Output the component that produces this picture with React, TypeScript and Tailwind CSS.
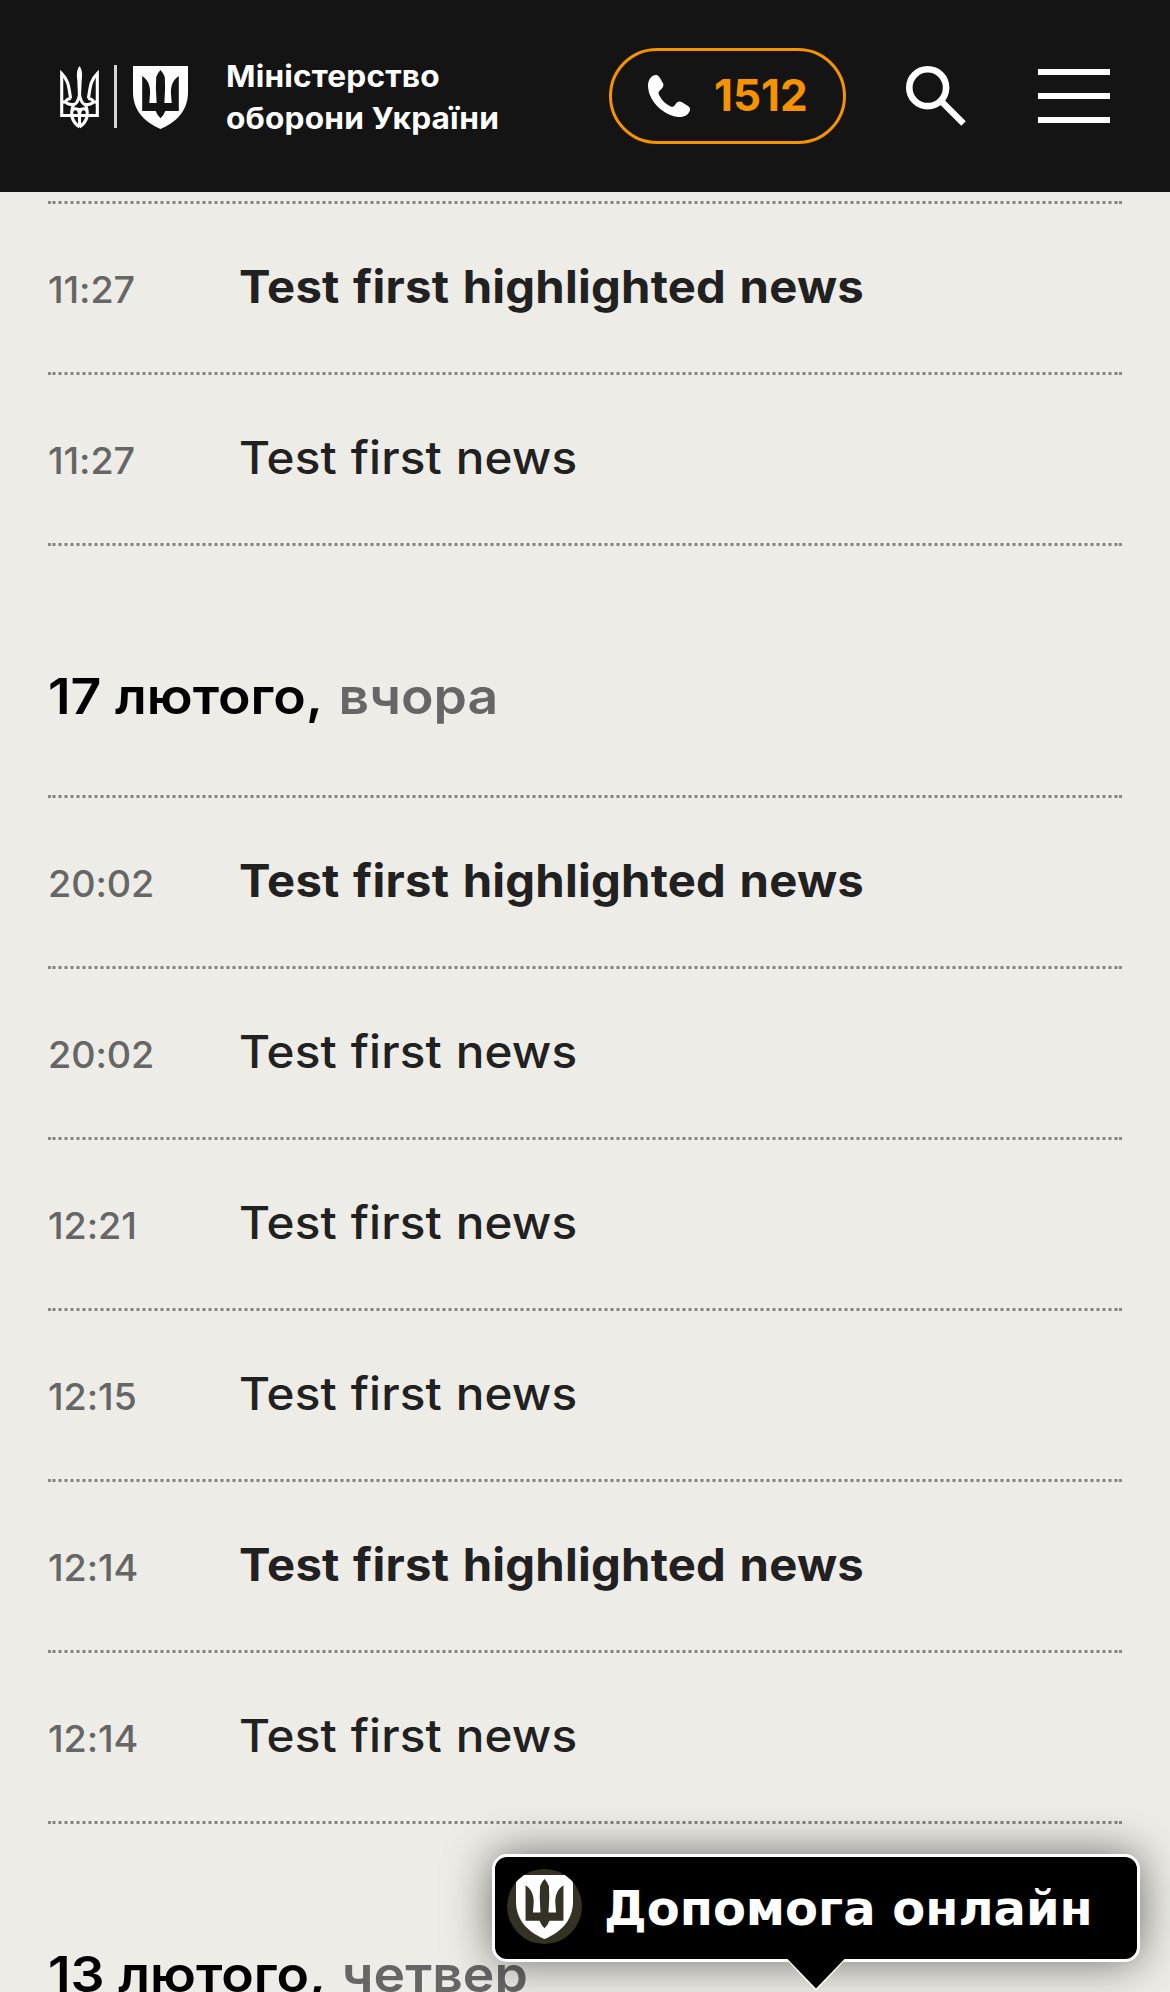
type NewsItem = { time: string; title: string; bold?: boolean };

const TODAY: NewsItem[] = [
  { time: "11:27", title: "Test first highlighted news", bold: true },
  { time: "11:27", title: "Test first news" },
];

const YESTERDAY: NewsItem[] = [
  { time: "20:02", title: "Test first highlighted news", bold: true },
  { time: "20:02", title: "Test first news" },
  { time: "12:21", title: "Test first news" },
  { time: "12:15", title: "Test first news" },
  { time: "12:14", title: "Test first highlighted news", bold: true },
  { time: "12:14", title: "Test first news" },
];

function Trident() {
  const half = (
    <>
      <path d="M20 49.5H1.7V7.5C8.5 14 8.8 21 10.6 32.5" />
      <path d="M10.8 32.5C7.5 32.8 6 34.2 5.8 36C7 38.2 9.5 38.6 13.5 38.6C16 38.4 18 36 19.5 29" />
      <path d="M1.6 36H5.8" />
      <path d="M13.5 38.6C11.5 44 11 47 12.2 51.5C13.5 56 16 58.5 19.5 61" />
      <path d="M12 44.5C16 41 19.5 43 19.5 49" />
    </>
  );
  return (
    <svg width="39" height="63" viewBox="0 0 39 63" fill="none" stroke="#fff" strokeWidth="3.1">
      {half}
      <g transform="matrix(-1 0 0 1 39 0)">{half}</g>
      <path d="M19.5 42V61" />
      <path d="M19.5 0C22.4 4 22.4 9 21.7 14L21 31H18L17.3 14C16.6 9 16.6 4 19.5 0Z" fill="#fff" stroke="none" />
    </svg>
  );
}

function Shield({ width, height, mark }: { width: number; height: number; mark: string }) {
  return (
    <svg width={width} height={height} viewBox="0 0 55 63" preserveAspectRatio="none">
      <path d="M0 0H55V26C55 46 41.5 57 27.5 63C13.5 57 0 46 0 26Z" fill="#fff" />
      <path
        d="M9.2 10C14.5 13.5 17.3 19 17.1 27L16.3 37H23.6L22.9 22L23.2 11Q25 6.5 27.5 4Q30 6.5 31.8 11L32.1 22L31.4 37H38.7L37.9 27C37.7 19 40.5 13.5 45.8 10V45H32.3Q31 49 27.5 52.3Q24 49 22.7 45H9.2Z"
        fill={mark}
      />
    </svg>
  );
}

function Header() {
  return (
    <header className="flex h-[192px] items-center bg-[#141414] px-[60px] text-white">
      <div className="flex items-center">
        <div className="mt-[3px]">
          <Trident />
        </div>
        <div className="ml-[15px] h-[63px] w-[3px] bg-[#d3d3db]" />
        <div className="mt-[3px] ml-4">
          <Shield width={55} height={63} mark="#141414" />
        </div>
        <div className="mt-[2px] ml-[38px] w-[289px] origin-left scale-x-[1.055] text-[30px] leading-[42px] font-bold tracking-[0.15px] whitespace-nowrap">
          <div>Міністерство</div>
          <div>оборони України</div>
        </div>
      </div>
      <a className="ml-auto flex h-[96px] w-[237px] items-center rounded-full border-[3px] border-[#f59300] pl-9">
        <svg width="42" height="42" viewBox="0 0 42 42" fill="#fff">
          <path d="M8 0C10 0 11.3 1.4 15 8.2C16 10.2 15 12.3 13.6 13.8L11.8 15.4C10.2 16.8 10.2 18.4 11.2 20.2C14.2 25.6 17.4 28.9 22.2 31.3C24 32.2 25.7 32 27 30C29 26.6 31.4 25.8 34 27.2L40 31C42 32.5 42.4 34 41.8 35.8C40 40.6 35.4 42.5 30 42C15 40 .6 26.4 0 11C0 5 3 .4 8 0Z" />
        </svg>
        <span className="mb-[2px] ml-6 text-[44px] leading-[54px] font-bold text-[#f59300]">1512</span>
      </a>
      <svg className="ml-[60px]" width="60" height="60" viewBox="0 0 60 60" fill="none" stroke="#fff">
        <circle cx="21.7" cy="21.7" r="18.4" strokeWidth="6.6" />
        <path d="M34.5 34.5L57.5 57.5" strokeWidth="6.4" />
      </svg>
      <div className="ml-[72px] flex w-[72px] flex-col gap-[18px]">
        <div className="h-[6px] bg-white" />
        <div className="h-[6px] bg-white" />
        <div className="h-[6px] bg-white" />
      </div>
    </header>
  );
}

function DottedRule() {
  return (
    <div className="flex h-[3px]">
      <div className="w-[3px] bg-[#8a8a87]" />
      <div className="ml-px grow bg-[repeating-linear-gradient(90deg,#b9b8b4_0_1px,#82827f_1px_3px,#b9b8b4_3px_4px,transparent_4px_6px)]" />
      <div className="w-[3px] bg-[#8a8a87]" />
    </div>
  );
}

function NewsList({ items }: { items: NewsItem[] }) {
  return (
    <div>
      <DottedRule />
      {items.map((item, i) => (
        <div key={i}>
          <div className="flex h-[168px] items-baseline pt-[55px] leading-[56px] whitespace-nowrap">
            <span className="w-[191px] origin-left scale-x-[1.02] text-[37px] font-[450] tracking-[-0.1px] text-[#666]">
              {item.time}
            </span>
            <span
              className={
                item.bold
                  ? "origin-left scale-x-[1.05] text-[45px] font-bold tracking-[0.2px] text-[#212121] [word-spacing:2px]"
                  : "origin-left scale-x-[1.06] text-[45px] font-[450] tracking-[0.1px] text-[#212121] [word-spacing:1px]"
              }
            >
              {item.title}
            </span>
          </div>
          <DottedRule />
        </div>
      ))}
    </div>
  );
}

function DayHeading({ date, day }: { date: string; day: string }) {
  return (
    <h2 className="mt-[120px] mb-[69px] h-[60px] origin-left scale-x-[1.07] text-[50px] leading-[60px] font-semibold whitespace-nowrap text-black">
      {date}, <span className="ml-[3px] text-[#666]">{day}</span>
    </h2>
  );
}

function HelpBubble() {
  return (
    <div className="absolute top-[1854px] left-[492px] flex h-[108px] w-[648px] items-center rounded-[15px] border-[3px] border-white bg-black pl-3 shadow-[0_0_45px_rgba(0,0,0,0.55)]">
      <div className="mb-[3px] flex h-[75px] w-[75px] items-center justify-center overflow-hidden rounded-full bg-[#353124]">
        <Shield width={57} height={64} mark="#353124" />
      </div>
      <span className="ml-[22px] font-['DejaVu_Sans',sans-serif] text-[48px] leading-[56px] font-bold whitespace-nowrap text-white">
        Допомога онлайн
      </span>
      <svg className="absolute top-[102px] left-[291px]" width="60" height="33" viewBox="0 0 60 33">
        <path d="M0 0L30 32L60 0Z" fill="#fff" />
        <path d="M1.5 0L30 29.6L58.5 0Z" fill="#000" />
      </svg>
    </div>
  );
}

export default function App() {
  return (
    <div className="relative h-[1992px] w-[1170px] overflow-hidden bg-[#edece6] font-['Inter',sans-serif]">
      <Header />
      <main className="px-12 pt-[9px]">
        <NewsList items={TODAY} />
        <DayHeading date="17 лютого" day="вчора" />
        <NewsList items={YESTERDAY} />
        <DayHeading date="13 лютого" day="четвер" />
      </main>
      <HelpBubble />
    </div>
  );
}
